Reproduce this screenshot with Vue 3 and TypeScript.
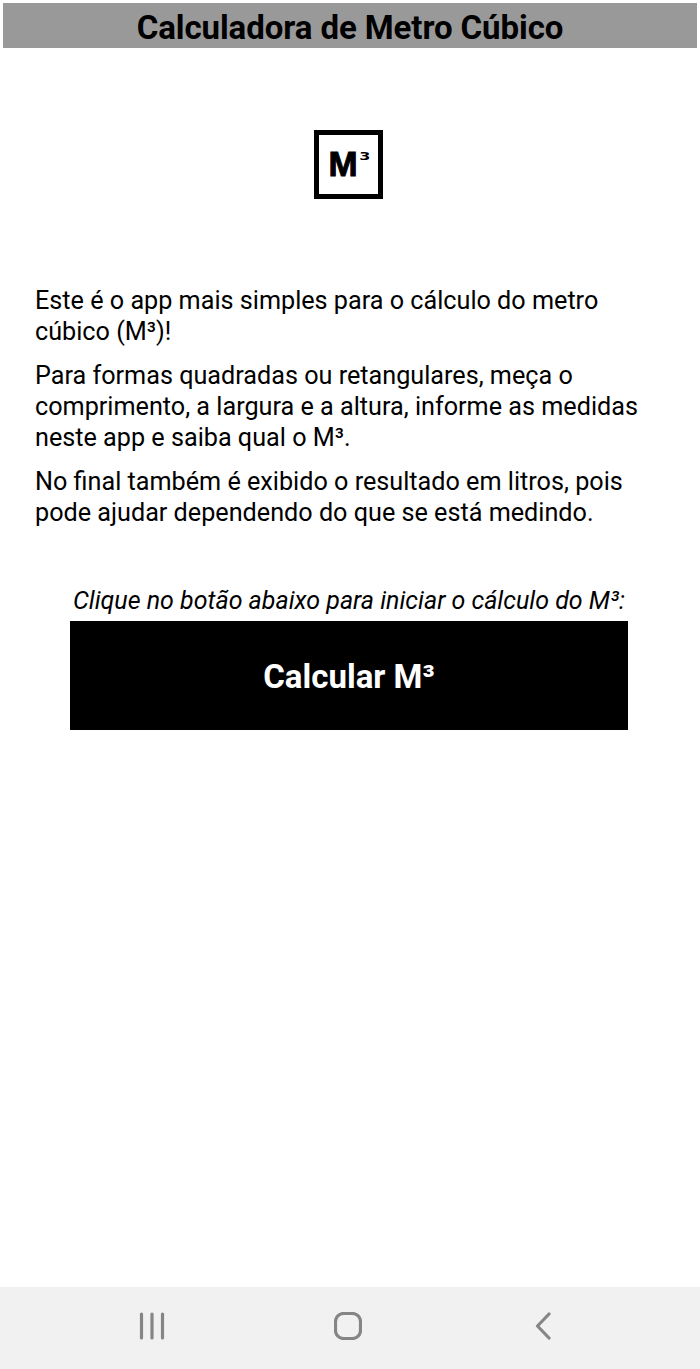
<template>
  <div class="screen">
    <header class="title-bar">Calculadora de Metro Cúbico</header>

    <main class="content">
      <div class="logo">
        <span class="logo__m">M</span><span class="logo__sup">3</span>
      </div>

      <section class="intro">
        <p v-for="text in paragraphs" :key="text">{{ text }}</p>
      </section>

      <p class="hint">Clique no botão abaixo para iniciar o cálculo do M³:</p>
      <button class="calc-btn" type="button">Calcular M³</button>
    </main>

    <nav class="nav-bar" aria-hidden="true">
      <svg class="nav-icon" width="28" height="28" viewBox="0 0 28 28">
        <path d="M3.5 2v24M14 2v24M24.5 2v24" />
      </svg>
      <svg class="nav-icon" width="28" height="28" viewBox="0 0 28 28">
        <rect x="1.5" y="1.5" width="25" height="25" rx="8" />
      </svg>
      <svg class="nav-icon" width="28" height="28" viewBox="0 0 28 28">
        <path d="M19 2 7.5 14 19 26" />
      </svg>
    </nav>
  </div>
</template>

<script setup lang="ts">
const paragraphs: string[] = [
  'Este é o app mais simples para o cálculo do metro cúbico (M³)!',
  'Para formas quadradas ou retangulares, meça o comprimento, a largura e a altura, informe as medidas neste app e saiba qual o M³.',
  'No final também é exibido o resultado em litros, pois pode ajudar dependendo do que se está medindo.',
]
</script>

<style>
html,
body {
  margin: 0;
  background: #fff;
}
</style>

<style scoped>
.screen {
  height: 1369px;
  display: flex;
  flex-direction: column;
  box-sizing: border-box;
  padding-top: 3px;
  font-family: Roboto, "Liberation Sans", sans-serif;
  color: #000;
  background: #fff;
}

.title-bar {
  margin: 0 3px;
  height: 45px;
  line-height: 49px;
  text-align: center;
  background: #999;
  font-size: 33px;
  font-weight: 700;
  letter-spacing: -0.08px;
}

.content {
  flex: 1;
  display: flex;
  flex-direction: column;
  align-items: center;
  padding-right: 2px;
}

.logo {
  margin: 82px 0 0 -1px;
  width: 69px;
  height: 69px;
  box-sizing: border-box;
  border: 5px solid #000;
  display: flex;
  align-items: center;
  justify-content: center;
  padding-bottom: 2px;
  font-family: "Liberation Sans", sans-serif;
  font-weight: 700;
}

.logo__m {
  font-size: 35px;
  line-height: 35px;
  -webkit-text-stroke: 1px #000;
}

.logo__sup {
  font-family: "DejaVu Sans", sans-serif;
  font-size: 11px;
  line-height: 11px;
  margin: -14px 0 0 3px;
  transform: scaleX(1.45);
}

.intro {
  align-self: stretch;
  margin-top: 86px;
  padding: 0 24px 0 35px;
  font-size: 25.2px;
  line-height: 31.2px;
}

.intro p {
  margin: 0 0 12.5px;
}

.hint {
  margin: 44px 0 0;
  font-size: 25px;
  line-height: 31px;
  font-style: italic;
  font-weight: 400;
  white-space: nowrap;
}

.calc-btn {
  margin-top: 5px;
  width: 558px;
  height: 109px;
  border: 0;
  padding: 2px 0 0;
  background: #000;
  color: #fff;
  font-family: inherit;
  font-size: 33px;
  font-weight: 700;
}

.nav-bar {
  height: 82px;
  flex: none;
  background: #f1f1f1;
  display: grid;
  grid-template-columns: 1fr 1fr 1fr;
  justify-items: center;
  align-items: center;
  padding: 0 58px 4px 54px;
  box-sizing: border-box;
}

.nav-icon {
  fill: none;
  stroke: #858585;
  stroke-width: 3.2;
  stroke-linecap: round;
  stroke-linejoin: round;
}
</style>
